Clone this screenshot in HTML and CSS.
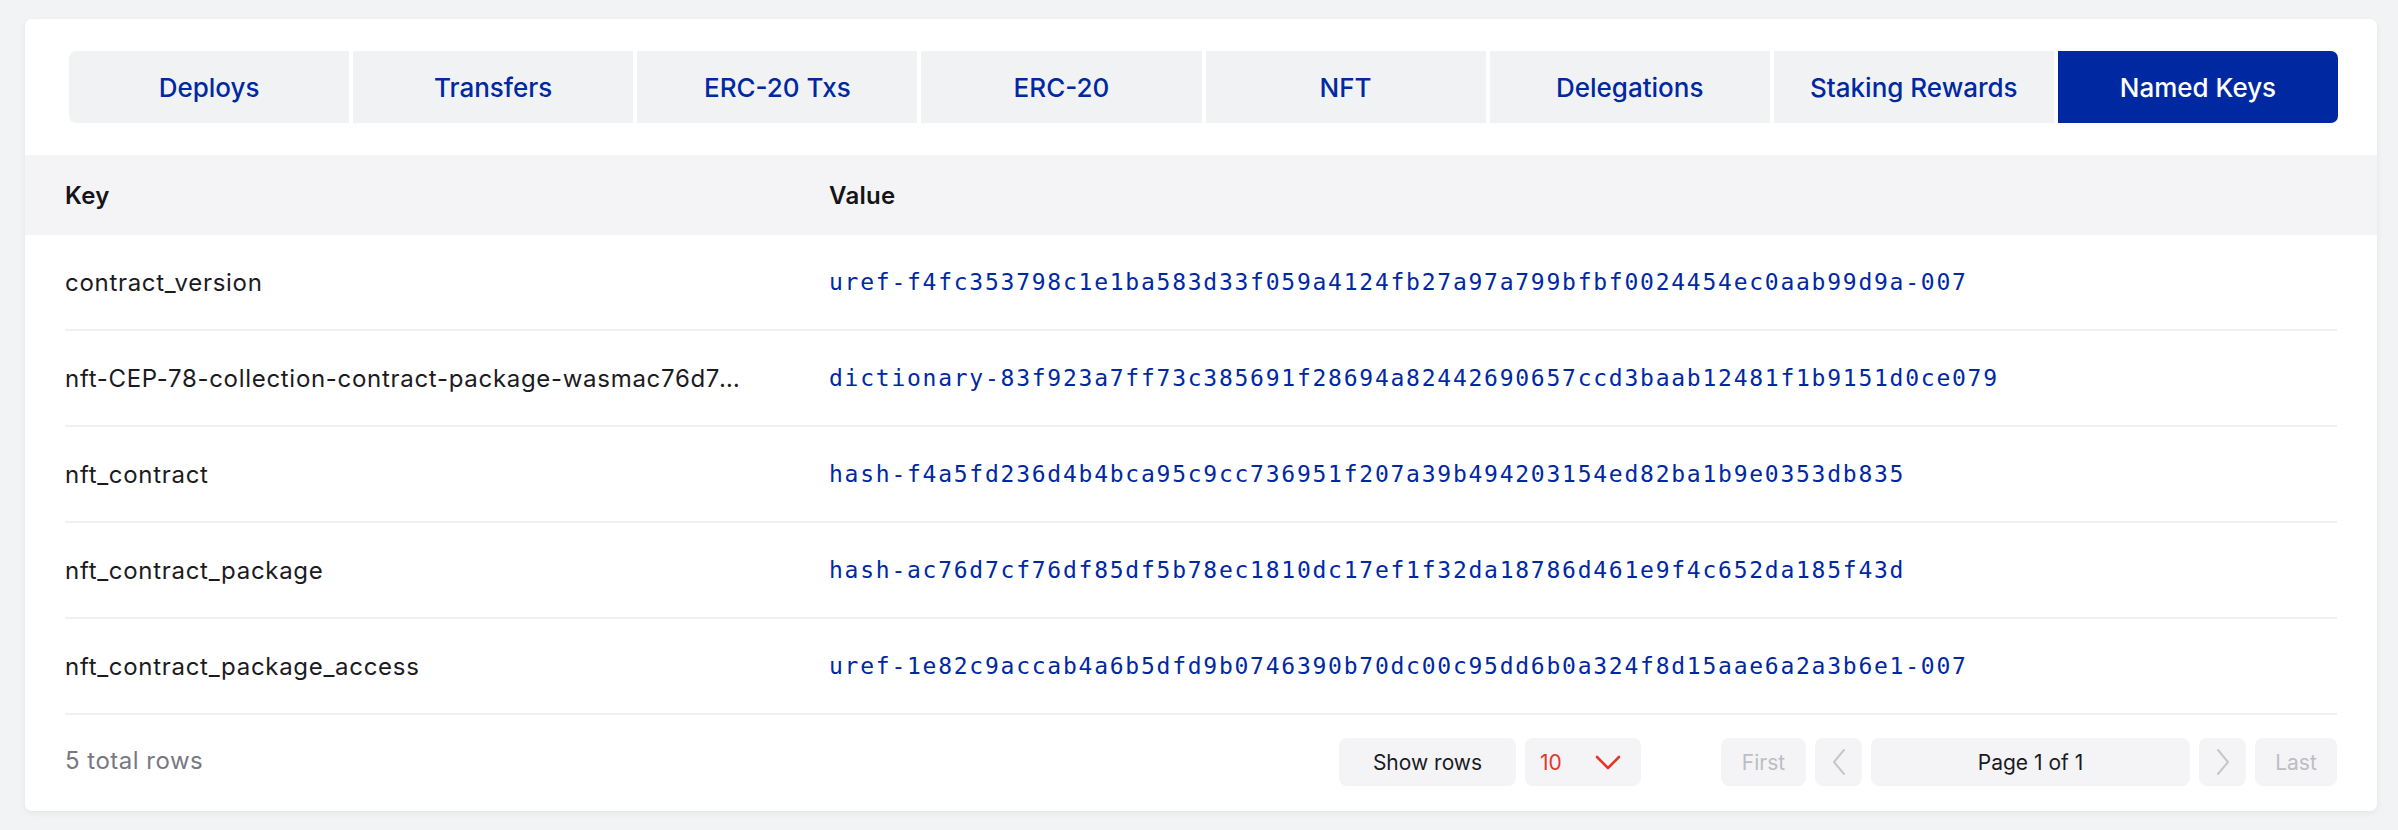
FILE: index.html
```html
<!DOCTYPE html>
<html lang="en">
<head>
<meta charset="utf-8">
<title>Named Keys</title>
<link rel="stylesheet" href="styles.css">
</head>
<body>
<div class="card">
  <nav class="tabs">
    <div class="tab">Deploys</div>
    <div class="tab">Transfers</div>
    <div class="tab">ERC-20 Txs</div>
    <div class="tab">ERC-20</div>
    <div class="tab">NFT</div>
    <div class="tab">Delegations</div>
    <div class="tab">Staking Rewards</div>
    <div class="tab active">Named Keys</div>
  </nav>
  <div class="table">
    <div class="thead">
      <div class="cell">Key</div>
      <div class="cell">Value</div>
    </div>
    <div class="tbody">
      <div class="row">
        <div class="cell key">contract_version</div>
        <div class="cell val">uref-f4fc353798c1e1ba583d33f059a4124fb27a97a799bfbf0024454ec0aab99d9a-007</div>
      </div>
      <div class="row">
        <div class="cell key">nft-CEP-78-collection-contract-package-wasmac76d7cf76df85df5b78ec1810dc17ef1f32da18786d461e9f4c652da185f43d</div>
        <div class="cell val">dictionary-83f923a7ff73c385691f28694a82442690657ccd3baab12481f1b9151d0ce079</div>
      </div>
      <div class="row">
        <div class="cell key">nft_contract</div>
        <div class="cell val">hash-f4a5fd236d4b4bca95c9cc736951f207a39b494203154ed82ba1b9e0353db835</div>
      </div>
      <div class="row">
        <div class="cell key">nft_contract_package</div>
        <div class="cell val">hash-ac76d7cf76df85df5b78ec1810dc17ef1f32da18786d461e9f4c652da185f43d</div>
      </div>
      <div class="row">
        <div class="cell key">nft_contract_package_access</div>
        <div class="cell val">uref-1e82c9accab4a6b5dfd9b0746390b70dc00c95dd6b0a324f8d15aae6a2a3b6e1-007</div>
      </div>
    </div>
  </div>
  <div class="footer">
    <div class="total">5 total rows</div>
    <div class="controls">
      <div class="btn show-rows">Show rows</div>
      <div class="btn select">
        <span class="select-val">10</span>
        <svg class="chev-down" width="26" height="15" viewBox="0 0 26 15"><path d="M2 2 L13 13 L24 2" fill="none" stroke="#e2382a" stroke-width="2.6" stroke-linecap="round" stroke-linejoin="round"/></svg>
      </div>
      <div class="pager">
        <div class="btn disabled first">First</div>
        <div class="btn disabled arrow">
          <svg width="14" height="26" viewBox="0 0 14 26"><path d="M12 1 L2 13 L12 25" fill="none" stroke="#c6c6cb" stroke-width="2" stroke-linecap="round" stroke-linejoin="round"/></svg>
        </div>
        <div class="btn page">Page 1 of 1</div>
        <div class="btn disabled arrow">
          <svg width="14" height="26" viewBox="0 0 14 26"><path d="M2 1 L12 13 L2 25" fill="none" stroke="#c6c6cb" stroke-width="2" stroke-linecap="round" stroke-linejoin="round"/></svg>
        </div>
        <div class="btn disabled last">Last</div>
      </div>
    </div>
  </div>
</div>
</body>
</html>
```

FILE: styles.css
```css
* { box-sizing: border-box; }

html, body {
  margin: 0;
  background: #f2f3f5;
}

body {
  padding: 19px 21px 19px 25px;
  font-family: Inter, "Noto Sans", "Liberation Sans", sans-serif;
  font-size: 24px;
  color: #1b1b1f;
}

.card {
  background: #ffffff;
  border-radius: 7px;
  padding-top: 32px;
  box-shadow: 0 2px 6px rgba(20, 20, 40, 0.06);
}

.tabs {
  display: flex;
  gap: 4px;
  padding: 0 39px 0 44px;
}

.tab {
  flex: 1 1 0;
  height: 72px;
  display: flex;
  align-items: center;
  justify-content: center;
  background: #f1f2f4;
  color: #0029a1;
  font-size: 26px;
  font-weight: 500;
}

.tab:first-child { border-radius: 7px 0 0 7px; }
.tab:last-child { border-radius: 0 7px 7px 0; }

.tab.active {
  background: #0029a1;
  color: #ffffff;
}

.table {
  margin-top: 32px;
}

.thead {
  display: grid;
  grid-template-columns: 764px 1fr;
  align-items: center;
  height: 80px;
  padding: 0 40px;
  background: #f4f4f6;
  font-weight: 600;
  color: #151518;
  letter-spacing: 0.3px;
}

.tbody {
  padding: 0 40px;
}

.row {
  display: grid;
  grid-template-columns: 764px 1fr;
  align-items: center;
  height: 96px;
  border-bottom: 2px solid #f1f1f3;
}

.cell {
  min-width: 0;
}

.key {
  white-space: nowrap;
  overflow: hidden;
  text-overflow: ellipsis;
  padding-right: 76px;
  letter-spacing: 0.7px;
}

.val {
  font-family: "DejaVu Sans Mono", "Liberation Mono", monospace;
  font-size: 23px;
  letter-spacing: 1.75px;
  color: #0029a1;
  white-space: nowrap;
}

.footer {
  display: flex;
  align-items: center;
  height: 96px;
  padding: 0 40px 2px;
}

.total {
  color: #787882;
  letter-spacing: 0.5px;
  margin-top: -4px;
}

.controls {
  margin-left: auto;
  display: flex;
  align-items: center;
  gap: 9px;
}

.btn {
  height: 48px;
  display: flex;
  align-items: center;
  justify-content: center;
  background: #f4f4f6;
  border-radius: 8px;
  font-size: 21px;
  color: #1b1b1f;
}

.show-rows { width: 177px; }

.select {
  width: 116px;
  justify-content: space-between;
  padding: 0 20px 0 15px;
}

.select-val {
  color: #e2382a;
}

.pager {
  margin-left: 71px;
  display: flex;
  gap: 9px;
}

.disabled { color: #bdbdc3; }
.first { width: 85px; }
.arrow { width: 47px; }
.page { width: 319px; }
.last { width: 82px; }
```
